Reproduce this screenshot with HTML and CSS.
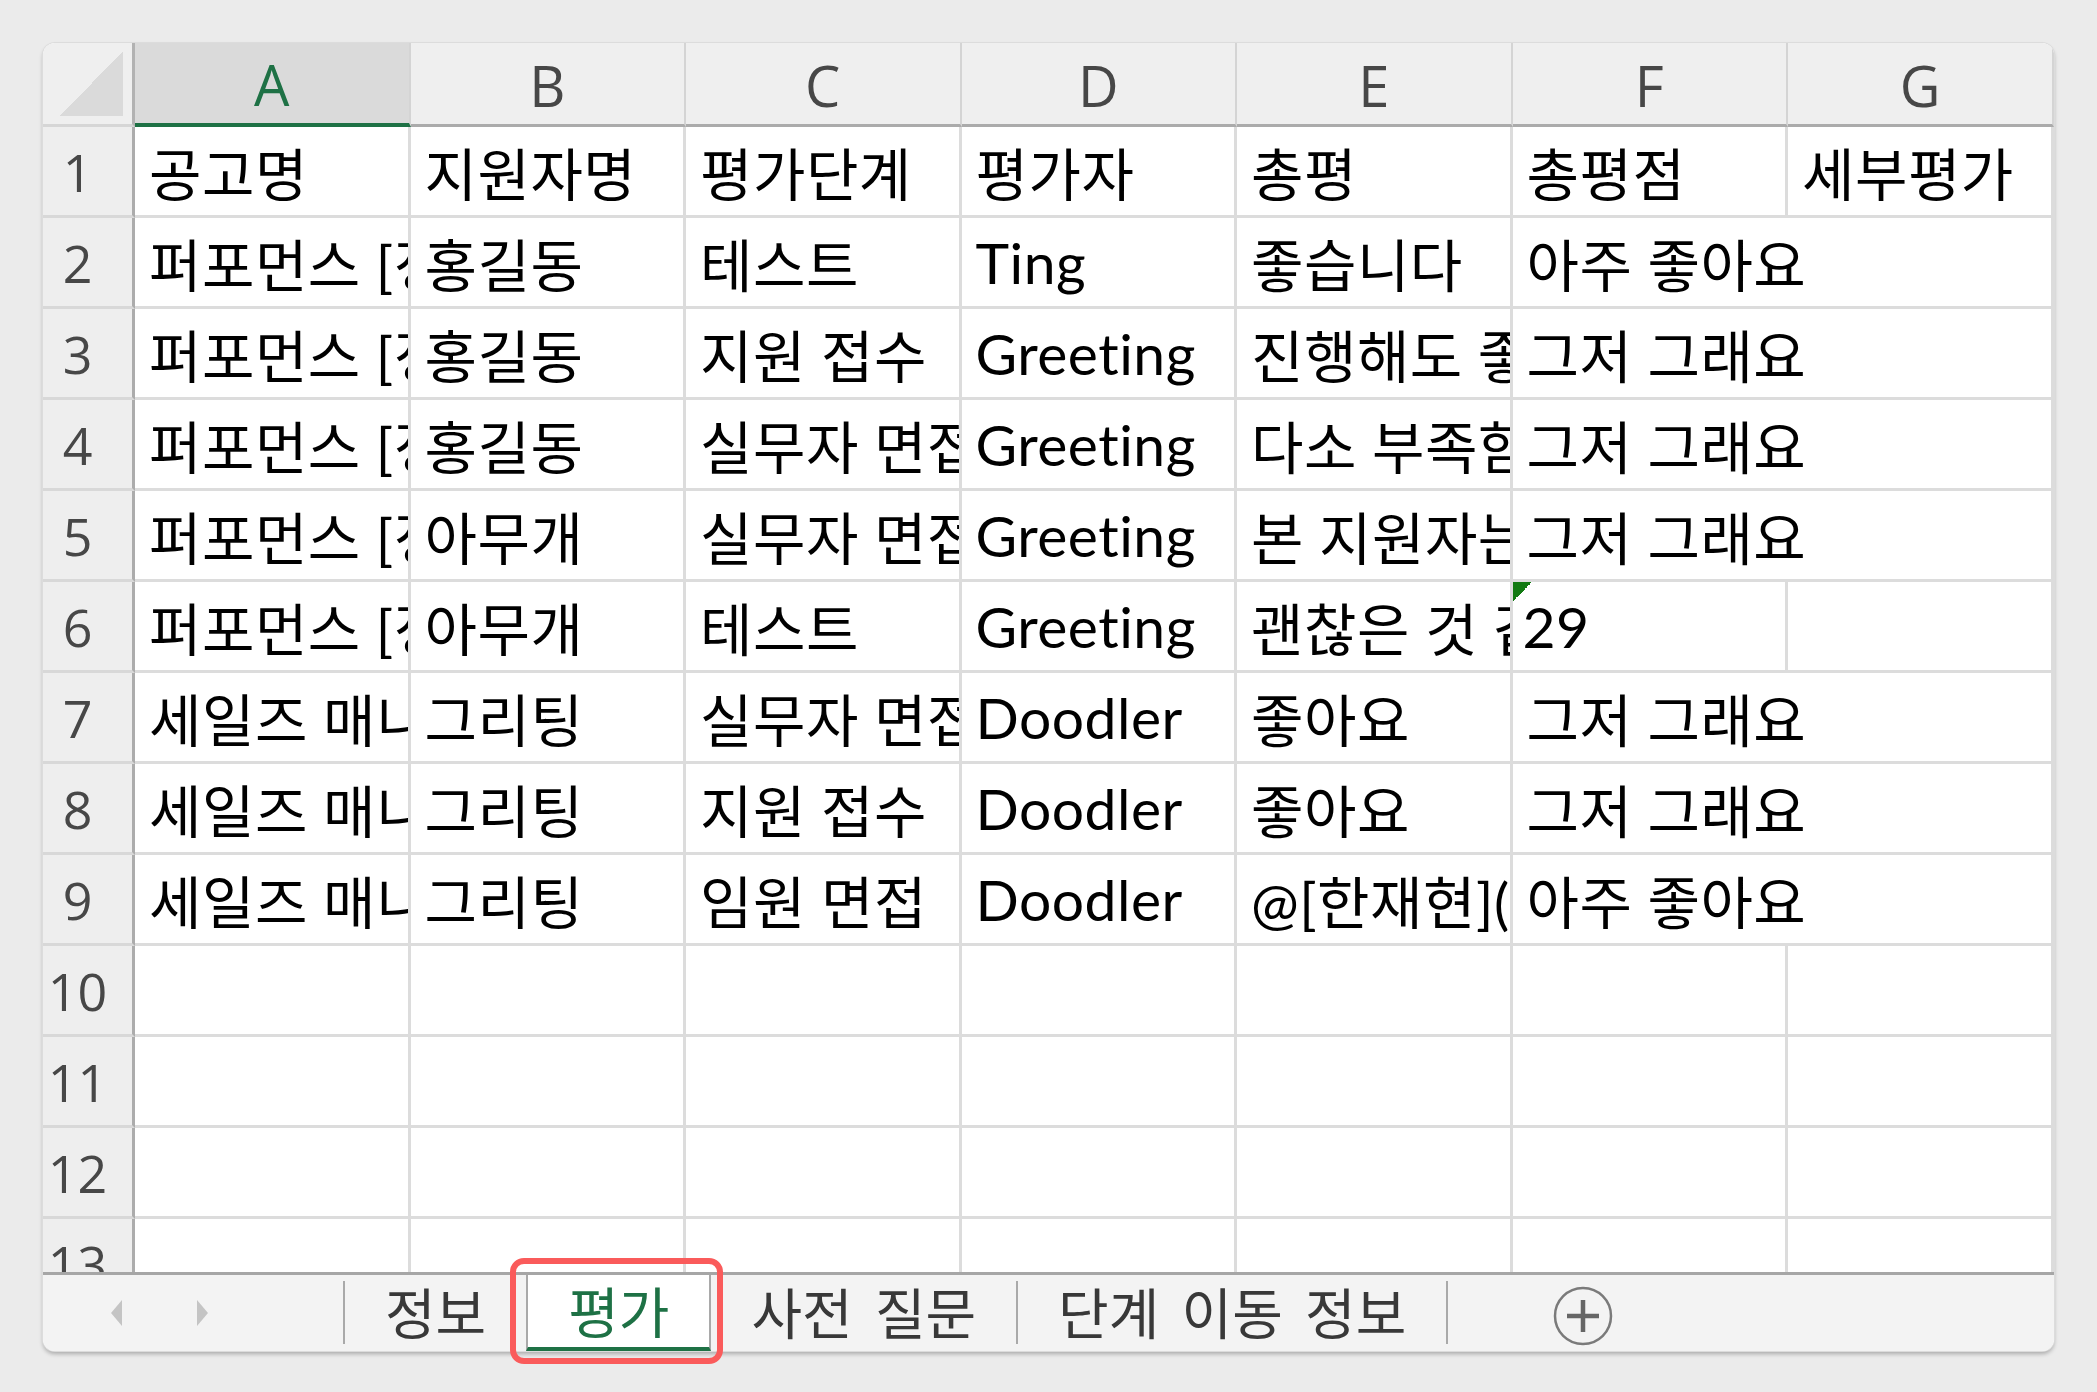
FILE: index.html
```html
<!DOCTYPE html>
<html lang="ko">
<head>
    <meta charset="UTF-8">
    <meta name="viewport" content="width=device-width, initial-scale=1.0">
    <title>평가 - 시트</title>
    <link rel="stylesheet" href="styles.css">
</head>
<body>
    <div class="window">
        <div class="sheet">
            <div class="corner"></div>
            <div class="col-head selected">A</div>
            <div class="col-head">B</div>
            <div class="col-head">C</div>
            <div class="col-head">D</div>
            <div class="col-head">E</div>
            <div class="col-head">F</div>
            <div class="col-head">G</div>

            <div class="row-head">1</div>
            <div class="cell">공고명</div>
            <div class="cell">지원자명</div>
            <div class="cell">평가단계</div>
            <div class="cell">평가자</div>
            <div class="cell">총평</div>
            <div class="cell">총평점</div>
            <div class="cell">세부평가</div>

            <div class="row-head">2</div>
            <div class="cell">퍼포먼스 [정규직] 마케터</div>
            <div class="cell">홍길동</div>
            <div class="cell">테스트</div>
            <div class="cell">Ting</div>
            <div class="cell">좋습니다</div>
            <div class="cell wide">아주 좋아요</div>

            <div class="row-head">3</div>
            <div class="cell">퍼포먼스 [정규직] 마케터</div>
            <div class="cell">홍길동</div>
            <div class="cell">지원 접수</div>
            <div class="cell">Greeting</div>
            <div class="cell">진행해도 좋을 것 같습니다</div>
            <div class="cell wide">그저 그래요</div>

            <div class="row-head">4</div>
            <div class="cell">퍼포먼스 [정규직] 마케터</div>
            <div class="cell">홍길동</div>
            <div class="cell">실무자 면접</div>
            <div class="cell">Greeting</div>
            <div class="cell">다소 부족함</div>
            <div class="cell wide">그저 그래요</div>

            <div class="row-head">5</div>
            <div class="cell">퍼포먼스 [정규직] 마케터</div>
            <div class="cell">아무개</div>
            <div class="cell">실무자 면접</div>
            <div class="cell">Greeting</div>
            <div class="cell">본 지원자는 경험이 많습니다</div>
            <div class="cell wide">그저 그래요</div>

            <div class="row-head">6</div>
            <div class="cell">퍼포먼스 [정규직] 마케터</div>
            <div class="cell">아무개</div>
            <div class="cell">테스트</div>
            <div class="cell">Greeting</div>
            <div class="cell">괜찮은 것 같아요</div>
            <div class="cell text-number">29</div>
            <div class="cell"></div>

            <div class="row-head">7</div>
            <div class="cell">세일즈 매니저</div>
            <div class="cell">그리팅</div>
            <div class="cell">실무자 면접</div>
            <div class="cell">Doodler</div>
            <div class="cell">좋아요</div>
            <div class="cell wide">그저 그래요</div>

            <div class="row-head">8</div>
            <div class="cell">세일즈 매니저</div>
            <div class="cell">그리팅</div>
            <div class="cell">지원 접수</div>
            <div class="cell">Doodler</div>
            <div class="cell">좋아요</div>
            <div class="cell wide">그저 그래요</div>

            <div class="row-head">9</div>
            <div class="cell">세일즈 매니저</div>
            <div class="cell">그리팅</div>
            <div class="cell">임원 면접</div>
            <div class="cell">Doodler</div>
            <div class="cell">@[한재현](user) 확인 부탁드립니다</div>
            <div class="cell wide">아주 좋아요</div>

            <div class="row-head">10</div>
            <div class="cell"></div><div class="cell"></div><div class="cell"></div><div class="cell"></div>
            <div class="cell"></div><div class="cell"></div><div class="cell"></div>

            <div class="row-head">11</div>
            <div class="cell"></div><div class="cell"></div><div class="cell"></div><div class="cell"></div>
            <div class="cell"></div><div class="cell"></div><div class="cell"></div>

            <div class="row-head">12</div>
            <div class="cell"></div><div class="cell"></div><div class="cell"></div><div class="cell"></div>
            <div class="cell"></div><div class="cell"></div><div class="cell"></div>

            <div class="row-head">13</div>
            <div class="cell"></div><div class="cell"></div><div class="cell"></div><div class="cell"></div>
            <div class="cell"></div><div class="cell"></div><div class="cell"></div>
        </div>

        <div class="tabbar">
            <div class="tab-nav">
                <svg class="nav-arrow" viewBox="0 0 14 28" width="14" height="28">
                    <path d="M13 1 L2 14 L13 27 Z" fill="#c4c4c4"/>
                </svg>
                <svg class="nav-arrow" viewBox="0 0 14 28" width="14" height="28">
                    <path d="M1 1 L12 14 L1 27 Z" fill="#c4c4c4"/>
                </svg>
            </div>
            <i class="tab-sep"></i>
            <div class="tab">정보</div>
            <div class="tab active">평가</div>
            <div class="tab">사전 질문</div>
            <i class="tab-sep"></i>
            <div class="tab">단계 이동 정보</div>
            <i class="tab-sep"></i>
            <div class="tab-add">
                <svg viewBox="0 0 62 62" width="62" height="62">
                    <circle cx="31" cy="31" r="28" fill="none" stroke="#7a7a7a" stroke-width="2.5"/>
                    <path d="M15 31 H47 M31 15 V47" stroke="#666" stroke-width="4.5"/>
                </svg>
            </div>
        </div>
    </div>
</body>
</html>
```

FILE: styles.css
```css
html, body {
    margin: 0;
    height: 100%;
}

body {
    background-color: #ebebeb;
    overflow: hidden;
    font-family: "Open Sans", "Noto Sans CJK KR", sans-serif;
}

.window {
    margin: 43px 0 0 43px;
    width: 2011px;
    height: 1308px;
    display: flex;
    flex-direction: column;
    border-radius: 12px;
    background-color: #fff;
    box-shadow: 0 0 0 1px #dcdcdc, 0 3px 4px rgba(0, 0, 0, 0.28);
}

/* grid area */
.sheet {
    height: 1229px;
    flex-shrink: 0;
    display: grid;
    grid-template-columns: 92px repeat(6, 275.5px) 1fr;
    grid-template-rows: 84px;
    grid-auto-rows: 91px;
    overflow: hidden;
    border-radius: 12px 12px 0 0;
}

.corner {
    background-color: #efefef;
    border-right: 3px solid #b2b2b2;
    border-bottom: 3px solid #d6d6d6;
    box-sizing: border-box;
    background-image: linear-gradient(to top left, #dadada 50%, transparent 50%);
    background-size: 63px 65px;
    background-position: right 9px bottom 8px;
    background-repeat: no-repeat;
}

.col-head {
    box-sizing: border-box;
    background-color: #efefef;
    border-right: 2px solid #d4d4d4;
    border-bottom: 3px solid #ababab;
    display: flex;
    align-items: center;
    justify-content: center;
    padding-top: 2px;
    font-size: 56px;
    color: #474747;
}

.col-head.selected {
    background-color: #dadada;
    border-bottom: 4px solid #1e7145;
    color: #1e7145;
}

.row-head {
    box-sizing: border-box;
    background-color: #eeeeee;
    border-right: 3px solid #acacac;
    border-bottom: 3px solid #d8d8d8;
    display: flex;
    align-items: center;
    justify-content: center;
    padding-right: 20px;
    font-size: 52px;
    color: #474747;
}

.cell {
    box-sizing: border-box;
    border-right: 3px solid #dcdcdc;
    border-bottom: 3px solid #dcdcdc;
    padding-left: 14px;
    display: flex;
    align-items: center;
    white-space: nowrap;
    overflow: hidden;
    font-family: Lato, "Noto Sans CJK KR", sans-serif;
    font-size: 57px;
    letter-spacing: 0.5px;
    color: #000;
}

/* text that runs into an empty neighbour */
.cell.wide {
    grid-column: span 2;
}

/* number stored as text marker */
.cell.text-number {
    padding-left: 10px;
    background-image: linear-gradient(to bottom right, #127a12 50%, transparent 50%);
    background-size: 19px 19px;
    background-repeat: no-repeat;
}

/* sheet tabs */
.tabbar {
    flex: 1;
    min-height: 0;
    display: flex;
    align-items: stretch;
    background-color: #f3f3f3;
    border-top: 3px solid #a6a6a6;
    border-radius: 0 0 12px 12px;
    font-size: 55px;
    line-height: 1;
    color: #383838;
}

.tab-nav {
    width: 300px;
    display: flex;
    align-items: center;
    gap: 73px;
    padding-left: 66px;
    box-sizing: border-box;
}

.tab-sep {
    width: 2px;
    margin: 6px 0 7px;
    background-color: #a9a9a9;
}

.tab {
    display: flex;
    align-items: center;
    padding: 0 40px 2px;
    word-spacing: 8px;
}

.tab.active {
    position: relative;
    background-color: #fff;
    border-left: 2px solid #a9a9a9;
    border-right: 2px solid #a9a9a9;
    border-bottom: 4px solid #1e7145;
    padding-bottom: 0;
    color: #1e7145;
}

/* highlight box round the selected tab */
.tab.active::after {
    content: "";
    position: absolute;
    top: -17px;
    left: -18px;
    right: -14px;
    bottom: -17px;
    border: 6px solid #fa5b5b;
    border-radius: 14px;
    pointer-events: none;
}

.tab-add {
    display: flex;
    align-items: center;
    margin-left: 104px;
    padding-top: 6px;
}
```
